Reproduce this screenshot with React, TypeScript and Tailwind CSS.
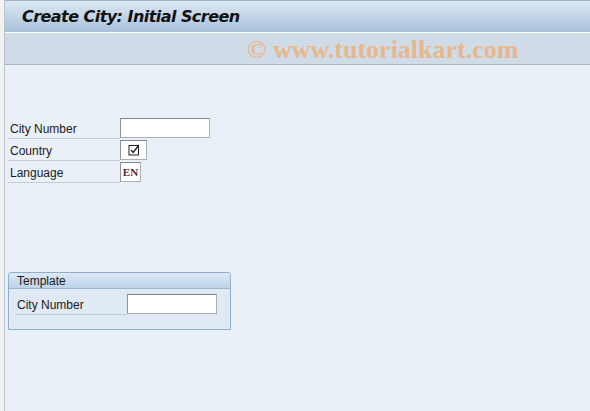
import React from "react";

const font = { fontFamily: "Tahoma, 'Liberation Sans', Arial, sans-serif" };

function Row({ label, children, width = "w-[112px]" }: { label: string; children: React.ReactNode; width?: string }) {
  return (
    <div className="flex items-center h-[22px]">
      <div className={`${width} h-[22px] flex items-end`}>
        <div className="w-full border-b border-[#c3ccd6] pl-[2px] text-[12px] leading-[18px] text-[#1a1a1a]">{label}</div>
      </div>
      {children}
    </div>
  );
}

function Input({ w, children }: { w: string; children?: React.ReactNode }) {
  return (
    <div className={`${w} h-[20px] bg-white border border-[#a9b1b8] border-t-[#7f8891] border-l-[#8d959c] flex items-center justify-center`}>
      {children}
    </div>
  );
}

export default function App() {
  return (
    <div className="w-[590px] h-[411px] flex bg-[#f0f0f0] overflow-hidden" style={font}>
      <div className="w-[4px] shrink-0 bg-[#f2f2f2]" />
      <div className="flex-1 flex flex-col border-l border-[#b9c3cd]">
        <div className="h-[32px] shrink-0 border-t border-[#a7b4c2] bg-gradient-to-b from-[#dce8f3] to-[#a9c2db] flex items-center pl-[17px]">
          <span className="text-[16px] font-bold italic text-[#111]" style={{ fontFamily: "Verdana, 'DejaVu Sans', sans-serif", letterSpacing: "-0.55px" }}>
            Create City: Initial Screen
          </span>
        </div>
        <div className="h-[1px] bg-white" />
        <div className="h-[32px] shrink-0 bg-[#cfdce8] border-b border-[#a9b5c1] flex items-center pl-[242px] pt-[3px]">
          <span className="text-[26px] leading-[28px] font-bold text-[#e8b78c]" style={{ fontFamily: "'Liberation Serif', 'DejaVu Serif', serif" }}>
            © www.tutorialkart.com
          </span>
        </div>
        <div className="flex-1 bg-[#e9f0f8] pl-[3px] pt-[52px]">
          <Row label="City Number">
            <Input w="w-[90px]" />
          </Row>
          <Row label="Country">
            <Input w="w-[27px]">
              <svg width="12" height="12" viewBox="0 0 12 12">
                <rect x="1" y="1.5" width="9.5" height="9.5" fill="none" stroke="#222" strokeWidth="1" />
                <path d="M3 6 L5.2 8.5 L11 1" fill="none" stroke="#222" strokeWidth="1.4" />
              </svg>
            </Input>
          </Row>
          <Row label="Language">
            <Input w="w-[21px]">
              <span className="text-[11px] font-bold text-[#5b1f2a]" style={{ fontFamily: "'Liberation Serif', 'DejaVu Serif', serif" }}>EN</span>
            </Input>
          </Row>
          <div className="mt-[89px] w-[223px] h-[58px] border border-[#8fadcc] rounded-t-[3px] bg-[#e0eaf4] flex flex-col">
            <div className="h-[16px] bg-gradient-to-b from-[#dde9f5] to-[#bdd3e9] border-b border-[#9cb7d2] pl-[8px] text-[12px] leading-[16px] text-[#1a1a1a] rounded-t-[2px]">
              Template
            </div>
            <div className="pl-[6px] pt-[4px]">
              <Row label="City Number" width="w-[112px]">
                <Input w="w-[90px]" />
              </Row>
            </div>
          </div>
        </div>
      </div>
    </div>
  );
}
